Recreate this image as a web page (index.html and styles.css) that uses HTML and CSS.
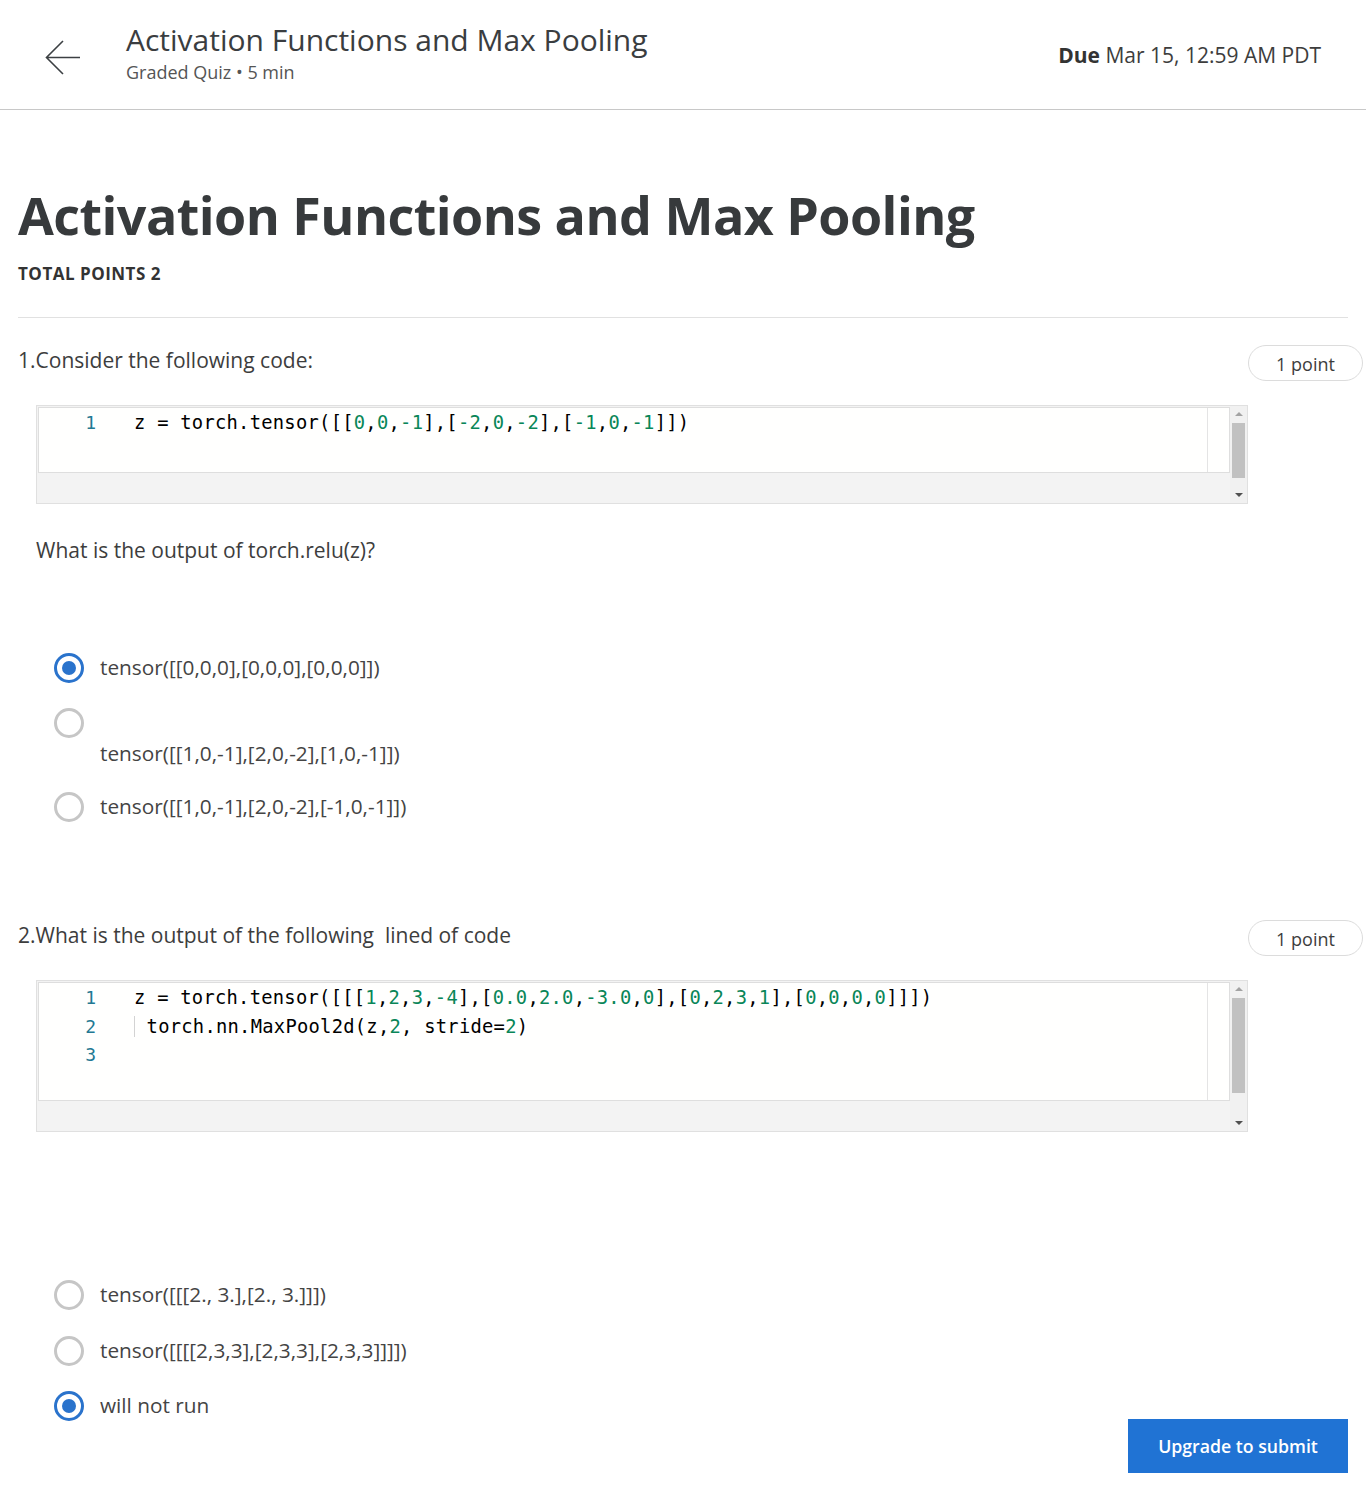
FILE: index.html
```html
<!DOCTYPE html>
<html lang="en">
<head>
<meta charset="utf-8">
<title>Activation Functions and Max Pooling</title>
<link rel="stylesheet" href="styles.css">
</head>
<body>
<header class="topbar">
  <div class="topbar-left">
    <svg class="back" width="36" height="36" viewBox="0 0 36 36" aria-hidden="true">
      <path d="M18 2 L1.5 18.5 L18 35 M1.5 18.5 H35" fill="none" stroke="#3c4043" stroke-width="1.6" stroke-linecap="butt" stroke-linejoin="miter"/>
    </svg>
    <div class="topbar-titles">
      <div class="topbar-title">Activation Functions and Max Pooling</div>
      <div class="topbar-sub">Graded Quiz • 5 min</div>
    </div>
  </div>
  <div class="due"><b>Due</b> Mar 15, 12:59 AM PDT</div>
</header>

<main class="quiz">
  <h1 class="quiz-title">Activation Functions and Max Pooling</h1>
  <div class="total">TOTAL POINTS 2</div>
  <hr class="rule">

  <section class="question q1">
    <div class="q-head">
      <div class="q-text">1.Consider the following code:</div>
      <div class="pill">1 point</div>
    </div>
    <div class="editor">
      <div class="editor-main">
        <div class="panel h1l">
          <div class="gutter"><div>1</div></div>
          <div class="code"><div class="line">z = torch.tensor([[<span class="n">0</span>,<span class="n">0</span>,<span class="n">-1</span>],[<span class="n">-2</span>,<span class="n">0</span>,<span class="n">-2</span>],[<span class="n">-1</span>,<span class="n">0</span>,<span class="n">-1</span>]])</div></div>
          <div class="ruler"></div>
        </div>
        <div class="hscroll"></div>
      </div>
      <div class="vscroll">
        <span class="arr up"></span>
        <span class="thumb t1"></span>
        <span class="arr down"></span>
      </div>
    </div>
    <div class="prompt">What is the output of torch.relu(z)?</div>
    <div class="options o1">
      <div class="opt"><span class="radio on"></span><span class="label">tensor([[0,0,0],[0,0,0],[0,0,0]])</span></div>
      <div class="opt"><span class="radio"></span><span class="label below">tensor([[1,0,-1],[2,0,-2],[1,0,-1]])</span></div>
      <div class="opt"><span class="radio"></span><span class="label">tensor([[1,0,-1],[2,0,-2],[-1,0,-1]])</span></div>
    </div>
  </section>

  <section class="question q2">
    <div class="q-head">
      <div class="q-text">2.What is the output of the following&nbsp; lined of code</div>
      <div class="pill">1 point</div>
    </div>
    <div class="editor">
      <div class="editor-main">
        <div class="panel h3l">
          <div class="gutter"><div>1</div><div>2</div><div>3</div></div>
          <div class="code">
            <div class="line">z = torch.tensor([[[<span class="n">1</span>,<span class="n">2</span>,<span class="n">3</span>,<span class="n">-4</span>],[<span class="n">0.0</span>,<span class="n">2.0</span>,<span class="n">-3.0</span>,<span class="n">0</span>],[<span class="n">0</span>,<span class="n">2</span>,<span class="n">3</span>,<span class="n">1</span>],[<span class="n">0</span>,<span class="n">0</span>,<span class="n">0</span>,<span class="n">0</span>]]])</div>
            <div class="line"><span class="indent"> </span>torch.nn.MaxPool2d(z,<span class="n">2</span>, stride=<span class="n">2</span>)</div>
            <div class="line"> </div>
          </div>
          <div class="ruler"></div>
        </div>
        <div class="hscroll"></div>
      </div>
      <div class="vscroll">
        <span class="arr up"></span>
        <span class="thumb t2"></span>
        <span class="arr down"></span>
      </div>
    </div>
    <div class="options o2">
      <div class="opt"><span class="radio"></span><span class="label">tensor([[[2., 3.],[2., 3.]]])</span></div>
      <div class="opt"><span class="radio"></span><span class="label">tensor([[[[2,3,3],[2,3,3],[2,3,3]]]])</span></div>
      <div class="opt"><span class="radio on"></span><span class="label">will not run</span></div>
    </div>
    <div class="submit-row"><button class="submit">Upgrade to submit</button></div>
  </section>
</main>
</body>
</html>
```

FILE: styles.css
```css
* { box-sizing: border-box; }
html, body { margin: 0; padding: 0; background: #fff; }
body {
  font-family: "Open Sans", "Noto Sans", sans-serif;
  color: #3d3d3d;
  width: 1366px;
  min-height: 1508px;
}

.topbar {
  height: 110px;
  border-bottom: 1px solid #c8c8c8;
  display: flex;
  justify-content: space-between;
  align-items: center;
  padding: 0 45px 0 45px;
}
.topbar-left { display: flex; align-items: center; gap: 45px; padding-top: 2px; }
.back { display: block; margin-top: 2px; }
.topbar-titles { display: flex; flex-direction: column; margin-top: -8px; }
.topbar-title { font-size: 30px; line-height: 40px; color: #3a3d40; font-weight: 400; }
.topbar-sub { font-size: 18px; line-height: 24px; color: #555; }
.due { font-size: 21px; color: #3d3d3d; }
.due b { font-weight: 700; color: #333; }

.quiz { padding: 0 18px; width: 1366px; }
.quiz-title {
  margin: 73px 0 0;
  font-size: 52px;
  line-height: 64px;
  font-weight: 700;
  color: #373a3c;
  letter-spacing: -0.55px;
}
.total {
  margin-top: 16px;
  font-size: 17px;
  line-height: 22px;
  font-weight: 700;
  color: #333;
  letter-spacing: 0.5px;
}
.rule { margin: 32px 0 0; width: 1330px; border: 0; border-top: 1px solid #e1e1e1; height: 0; }

.question { width: 1330px; }
.q-head { display: flex; justify-content: space-between; align-items: flex-start; margin-right: -15px; }
.q-text { font-size: 21px; line-height: 28px; color: #3d3d3d; margin-top: 1px; }
.pill {
  width: 115px;
  height: 36px;
  border: 1px solid #dcdcdc;
  border-radius: 18px;
  font-size: 18px;
  line-height: 36px;
  text-align: center;
  color: #3d3d3d;
}
.q1 .q-head { margin-top: 27px; }
.q2 .q-head { margin-top: 98px; }

.editor {
  margin: 24px 0 0 18px;
  width: 1212px;
  border: 1px solid #e0e0e0;
  display: flex;
  background: #f3f3f3;
}
.editor-main { flex: 1; display: flex; flex-direction: column; padding: 1px 0 0 1px; }
.panel {
  display: flex;
  background: #fffffe;
  border: 1px solid #dedede;
}
.panel.h1l { height: 66px; }
.panel.h3l { height: 119px; }
.hscroll { height: 30px; background: #f3f3f3; }
.gutter {
  width: 57px;
  text-align: right;
  font-family: "DejaVu Sans Mono", "Liberation Mono", monospace;
  font-size: 18px;
  line-height: 28.5px;
  color: #237893;
  padding-top: 1px;
}
.code {
  flex: 1;
  padding-left: 38px;
  padding-top: 1px;
  font-family: "DejaVu Sans Mono", "Liberation Mono", monospace;
  font-size: 18.8px;
  letter-spacing: 0.26px;
  line-height: 28.5px;
  color: #000;
}
.line { height: 28.5px; white-space: pre; }
.n { color: #098658; }
.indent { border-left: 1px solid #d3d3d3; }
.ruler { width: 22px; border-left: 1px solid #e4e4e4; }

.vscroll {
  width: 17px;
  background: #f1f1f1;
  display: flex;
  flex-direction: column;
  align-items: center;
  padding: 6px 0 6px;
}
.arr { width: 0; height: 0; border-left: 4px solid transparent; border-right: 4px solid transparent; }
.arr.up { border-bottom: 4px solid #a3a3a3; }
.arr.down { border-top: 4px solid #505050; margin-top: auto; }
.thumb { width: 13px; background: #c1c1c1; margin-top: 7px; }
.thumb.t1 { height: 55px; }
.thumb.t2 { height: 95px; }

.prompt { margin: 32px 0 0 18px; font-size: 21px; line-height: 28px; color: #3d3d3d; }

.options { margin-left: 36px; display: flex; flex-direction: column; gap: 25px; }
.o1 { margin-top: 89px; }
.o2 { margin-top: 148px; gap: 25.5px; }
.opt { display: flex; align-items: flex-start; gap: 16px; }
.radio {
  flex: none;
  width: 30px;
  height: 30px;
  border-radius: 50%;
  border: 3px solid #c6c6c6;
  display: flex;
  align-items: center;
  justify-content: center;
}
.radio.on { border-color: #2a73cc; }
.radio.on::after {
  content: "";
  width: 14px;
  height: 14px;
  border-radius: 50%;
  background: #2a73cc;
}
.label { font-size: 20.8px; line-height: 28px; color: #444; margin-top: 0; }
.label.below { margin-top: 31px; }

.submit-row { display: flex; justify-content: flex-end; margin-top: -2px; }
.submit {
  width: 220px;
  height: 54px;
  border: 0;
  background: #2073d4;
  color: #fff;
  font-family: "Open Sans", sans-serif;
  font-size: 17.7px;
  font-weight: 600;
  cursor: pointer;
}
```
